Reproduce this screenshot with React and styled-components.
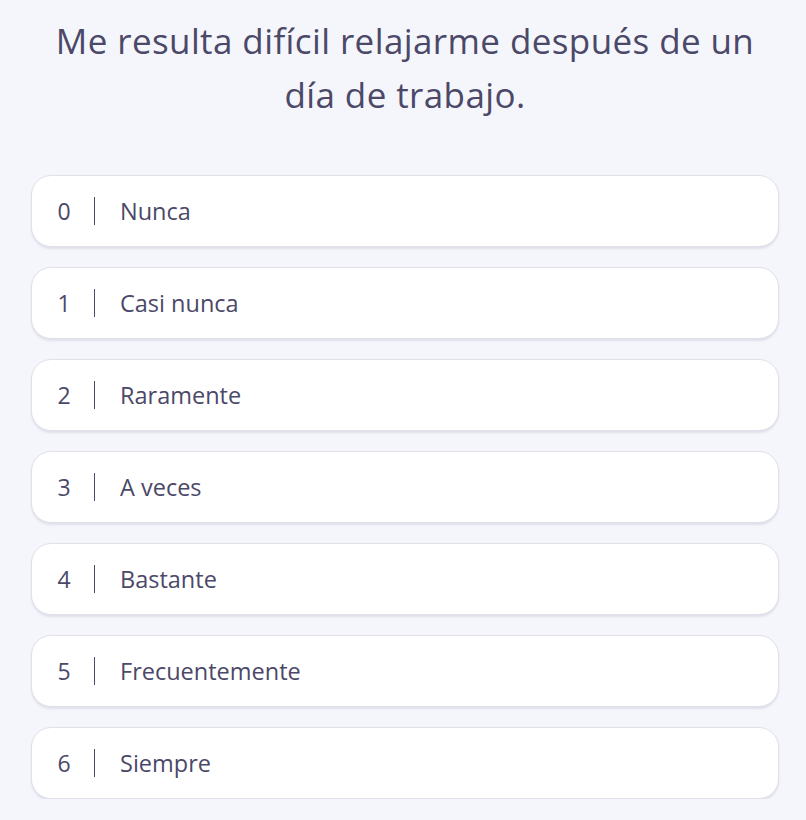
import React from "react";
import styled, { createGlobalStyle } from "styled-components";

const GlobalStyle = createGlobalStyle`
    html, body {
        margin: 0;
        padding: 0;
        background: #f5f6fc;
    }
    body {
        font-family: "Open Sans", Lato, "Liberation Sans", sans-serif;
        color: #4b4868;
    }
`;

const Page = styled.div`
    padding: 14px 27px 0 31px;
    display: flex;
    flex-direction: column;
`;

const Question = styled.h1`
    margin: 0 auto 53px;
    width: 704px;
    text-align: center;
    font-size: 35px;
    font-weight: 500;
    line-height: 54px;
    letter-spacing: 0.4px;
    color: #4b4868;
`;

const Options = styled.div`
    display: flex;
    flex-direction: column;
    gap: 20px;
`;

const Option = styled.button`
    display: flex;
    align-items: center;
    height: 72px;
    padding: 0 0 0 22px;
    background: #ffffff;
    border: 1px solid #e1e0ea;
    border-radius: 20px;
    box-shadow: 0 2px 2px rgba(80, 76, 120, 0.12);
    font-family: inherit;
    color: #4b4868;
    text-align: left;
    cursor: pointer;
`;

const Number = styled.span`
    width: 20px;
    font-size: 23px;
    text-align: center;
`;

const Divider = styled.span`
    width: 1px;
    height: 28px;
    background: #4b4868;
    margin: 0 25px 0 20px;
`;

const Label = styled.span`
    font-size: 23.5px;
`;

const answers = [
    "Nunca",
    "Casi nunca",
    "Raramente",
    "A veces",
    "Bastante",
    "Frecuentemente",
    "Siempre",
];

export default function App() {
    return (
        <>
            <GlobalStyle />
            <Page>
                <Question>Me resulta difícil relajarme después de un día de trabajo.</Question>
                <Options>
                    {answers.map((answer, i) => (
                        <Option key={answer}>
                            <Number>{i}</Number>
                            <Divider />
                            <Label>{answer}</Label>
                        </Option>
                    ))}
                </Options>
            </Page>
        </>
    );
}
